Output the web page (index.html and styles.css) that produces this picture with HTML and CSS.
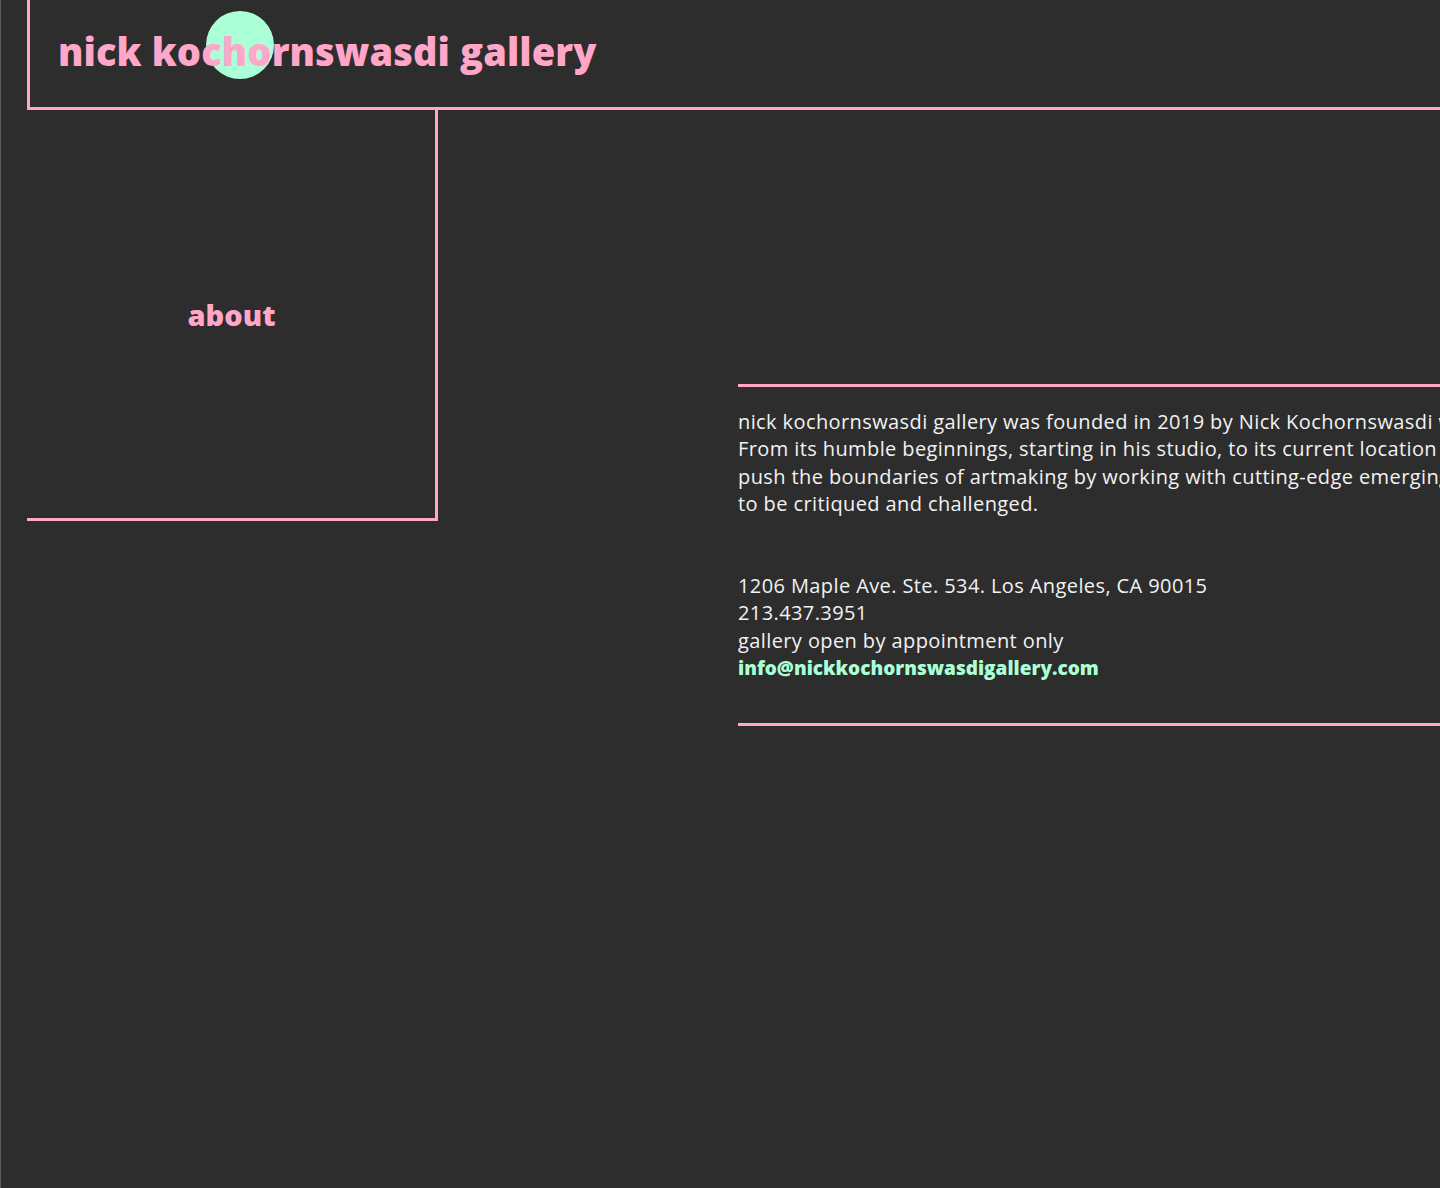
FILE: index.html
```html
<!DOCTYPE html>
<html lang="en">
<head>
<meta charset="utf-8">
<title>nick kochornswasdi gallery</title>
<link rel="stylesheet" href="styles.css">
</head>
<body>
<div class="page">
  <header class="site-header">
    <span class="dot" aria-hidden="true"></span>
    <h1 class="site-title">nick kochornswasdi gallery</h1>
  </header>
  <main class="layout">
    <nav class="side-nav">
      <a class="nav-link" href="#about">about</a>
    </nav>
    <section class="about" id="about">
      <p class="about-text">nick kochornswasdi gallery was founded in 2019 by Nick Kochornswasdi who wanted to build a space for new voices in contemporary art.<br>From its humble beginnings, starting in his studio, to its current location in the heart of downtown Los Angeles, the gallery continues to<br>push the boundaries of artmaking by working with cutting-edge emerging artists and giving their ideas a place<br>to be critiqued and challenged.</p>
      <p class="contact">1206 Maple Ave. Ste. 534. Los Angeles, CA 90015<br>213.437.3951<br>gallery open by appointment only<br><a class="email" href="mailto:info@nickkochornswasdigallery.com">info@nickkochornswasdigallery.com</a></p>
    </section>
  </main>
</div>
</body>
</html>
```

FILE: styles.css
```css
html, body {
  margin: 0;
  padding: 0;
  background: #2d2d2d;
  overflow: hidden;
}

body {
  min-height: 1188px;
  border-left: 1px solid #5a5a5a;
  box-sizing: border-box;
  font-family: "Open Sans", Lato, sans-serif;
  color: #f2f2f2;
}

.page {
  padding-left: 26px;
}

.site-header {
  position: relative;
  height: 107px;
  border-left: 3px solid #ffa6c9;
  border-bottom: 3px solid #ffa6c9;
  display: flex;
  align-items: center;
  padding-left: 28px;
}

.dot {
  position: absolute;
  left: 176px;
  top: 11px;
  width: 68px;
  height: 68px;
  border-radius: 50%;
  background: #aaffd6;
}

.site-title {
  position: relative;
  margin: 0;
  font-size: 38px;
  font-weight: 800;
  color: #ffa6c9;
  letter-spacing: 0.1px;
  line-height: 1;
  transform: translateY(-3px);
}

.layout {
  display: flex;
  align-items: flex-start;
}

.side-nav {
  flex: none;
  width: 408px;
  height: 408px;
  border-right: 3px solid #ffa6c9;
  border-bottom: 3px solid #ffa6c9;
  display: flex;
  align-items: center;
  justify-content: center;
}

.nav-link {
  color: #ffa6c9;
  font-weight: 800;
  font-size: 29px;
  text-decoration: none;
  padding-left: 1px;
}

.about {
  margin-left: 300px;
  margin-top: 274px;
  width: 1100px;
  flex: none;
  border-top: 3px solid #ffa6c9;
  border-bottom: 3px solid #ffa6c9;
  padding-top: 21px;
  padding-bottom: 41px;
  font-size: 20px;
  letter-spacing: 0.4px;
  line-height: 27.3px;
  white-space: nowrap;
}

.about-text {
  margin: 0 0 55px;
}

.contact {
  margin: 0;
}

.email {
  color: #aaffd6;
  font-weight: 800;
  font-size: 19px;
  letter-spacing: 0;
  text-decoration: none;
}
```
